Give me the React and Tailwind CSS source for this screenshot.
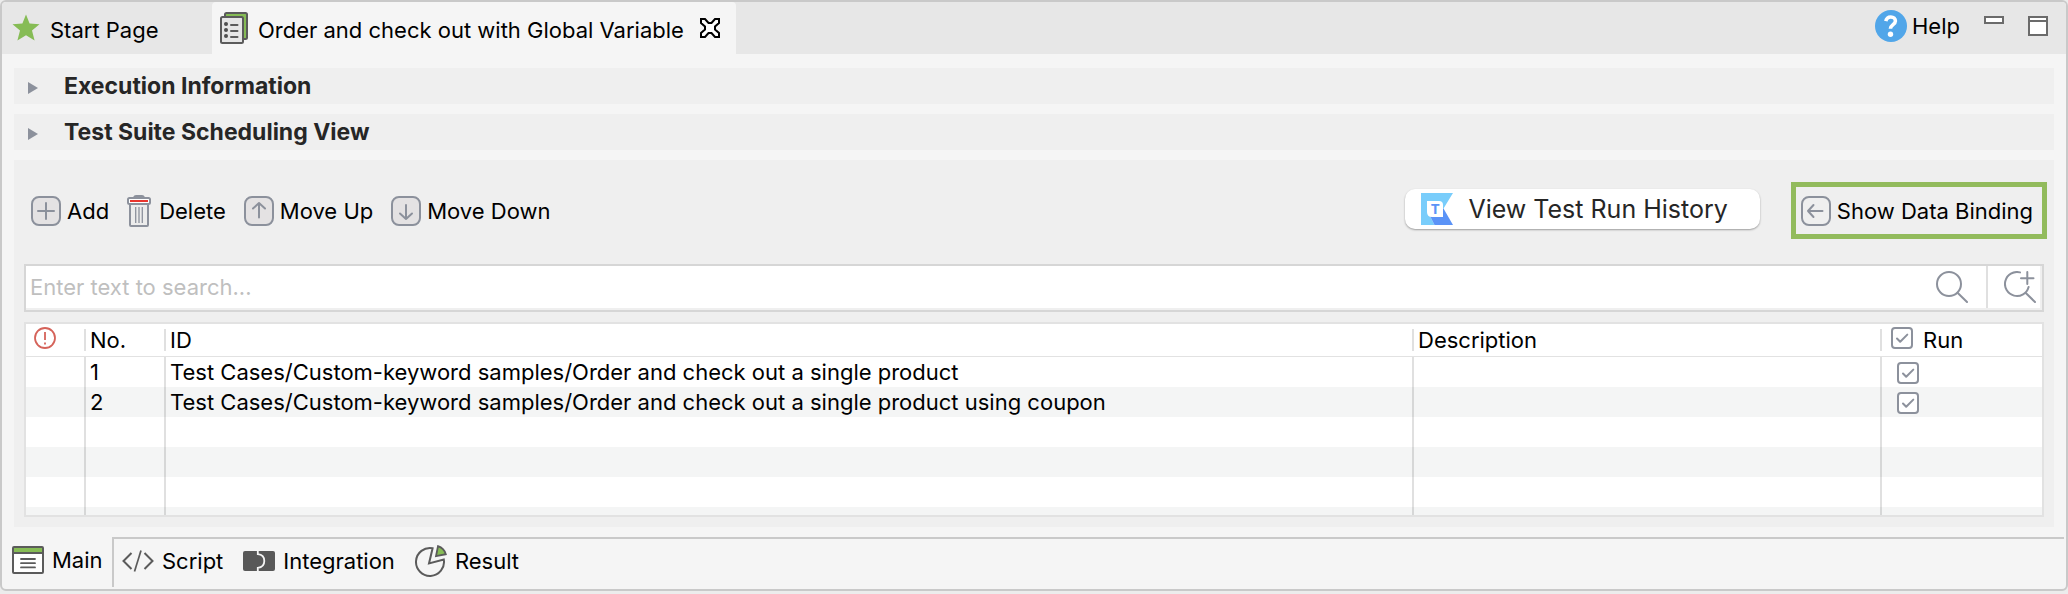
import { useState } from "react";

const CASES = [
  { no: 1, id: "Test Cases/Custom-keyword samples/Order and check out a single product" },
  { no: 2, id: "Test Cases/Custom-keyword samples/Order and check out a single product using coupon" },
];

function StarIcon() {
  return (
    <svg className="h-[28px] w-[28px]" viewBox="0 0 28 28" aria-hidden="true">
      <path fill="#86bc55" d="M14 0.5 17.6 9.6 27.5 10.2 20 16.6 22.6 26.5 14 21.2 5.4 26.5 8 16.6 0.5 10.2 10.4 9.6Z" />
    </svg>
  );
}

function SuiteIcon() {
  return (
    <svg className="h-[32px] w-[28px]" viewBox="0 0 28 32" aria-hidden="true">
      <rect x="5" y="1" width="22" height="26" rx="1.5" fill="#86bc55" stroke="#5b5b5b" strokeWidth="2" />
      <rect x="1" y="5" width="22" height="26" rx="1.5" fill="#e6e6e6" stroke="#5b5b5b" strokeWidth="2" />
      <g fill="#4f4f4f">
        <circle cx="6" cy="12" r="2" />
        <circle cx="6" cy="18" r="2" />
        <circle cx="6" cy="24" r="2" />
      </g>
      <path d="M11 13H17.5M11 19H17.5M11 25H17.5" stroke="#5b5b5b" strokeWidth="2" strokeLinecap="round" />
    </svg>
  );
}

function CloseIcon() {
  return (
    <svg className="h-[20px] w-[20px]" viewBox="0 0 20 20" aria-hidden="true">
      <path
        d="M1 1H5L8.5 5H11.5L15 1H19V5L15 8.5V11.5L19 15V19H15L11.5 15H8.5L5 19H1V15L5 11.5V8.5L1 5Z"
        fill="#fff"
        stroke="#000"
        strokeWidth="2"
      />
    </svg>
  );
}

function HelpIcon() {
  return (
    <svg className="h-[32px] w-[32px]" viewBox="0 0 32 32" aria-hidden="true">
      <circle cx="16" cy="16" r="16" fill="#51a6e9" />
      <path d="M10.8 11.2C11.4 8.3 13.2 7 15.8 7C18.6 7 20.4 8.7 20.4 11C20.4 14.6 15.4 14.6 15.4 18.8" fill="none" stroke="#fff" strokeWidth="3.6" />
      <circle cx="15.5" cy="24.2" r="2.7" fill="#fff" />
    </svg>
  );
}

function KeyIcon({ d, fill }) {
  return (
    <svg className="h-[30px] w-[30px]" viewBox="0 0 30 30" aria-hidden="true">
      <rect x="1" y="1" width="28" height="28" rx="7" fill={fill} stroke="#8c919c" strokeWidth="2" />
      <path d={d} fill="none" stroke="#8c919c" strokeWidth="2" strokeLinecap="round" strokeLinejoin="round" />
    </svg>
  );
}

function TrashIcon() {
  return (
    <svg className="h-[32px] w-[24px]" viewBox="0 0 24 32" aria-hidden="true">
      <path d="M6 2.2Q7 0 9 0H15Q17 0 18 2.2Z" fill="#8c919c" />
      <path d="M3 9V30Q3 31 4 31H20Q21 31 21 30V9" fill="#ececec" stroke="#8c919c" strokeWidth="2" />
      <rect x="1" y="3" width="22" height="6" rx="1.5" fill="#fff" stroke="#8c919c" strokeWidth="2" />
      <rect x="3" y="5" width="18" height="2" fill="#e8352e" />
      <path d="M8.7 12V28M12 12V28M15.3 12V28" stroke="#8c919c" strokeWidth="1.3" />
    </svg>
  );
}

function HistoryLogo() {
  return (
    <svg className="h-[32px] w-[32px]" viewBox="0 0 32 32" aria-hidden="true">
      <path d="M0 0H32L22.5 15.5L22 24L9 23L13.5 32H0Z" fill="#79cdfb" />
      <path d="M9 23L22.5 15.5L32 32H13.5Z" fill="#5b93f7" />
      <path d="M6 8H18Q22 8 22 12V24H11Q6 24 6 19Z" fill="#fff" />
      <text x="14.2" y="20.6" textAnchor="middle" fontFamily="'Liberation Mono', monospace" fontWeight="700" fontSize="15" fill="#5b93f7">T</text>
    </svg>
  );
}

function SearchIcon() {
  return (
    <svg className="h-[32px] w-[32px]" viewBox="0 0 32 32" aria-hidden="true">
      <g fill="none" stroke="#8c919c" strokeWidth="2" strokeLinecap="round">
        <circle cx="13" cy="13" r="12" />
        <path d="M21.8 22L31 31" />
      </g>
    </svg>
  );
}

function AdvancedSearchIcon() {
  return (
    <svg className="h-[32px] w-[32px]" viewBox="0 0 32 32" aria-hidden="true">
      <g fill="none" stroke="#8c919c" strokeWidth="2" strokeLinecap="round">
        <path d="M16 1.4A12 12 0 1 0 24.6 16" />
        <path d="M21.8 22L31 31M23.3 1V13M17 7.3H29.5" />
      </g>
    </svg>
  );
}

function AlertIcon() {
  return (
    <svg className="h-[22px] w-[22px]" viewBox="0 0 22 22" role="img" aria-label="Status">
      <circle cx="11" cy="11" r="10" fill="none" stroke="#d5635a" strokeWidth="1.8" />
      <path d="M11 5V13" stroke="#d5635a" strokeWidth="1.8" />
      <path d="M11 15.5V17.5" stroke="#d5635a" strokeWidth="1.8" />
    </svg>
  );
}

function MainIcon() {
  return (
    <svg className="h-[28px] w-[32px]" viewBox="0 0 32 28" aria-hidden="true">
      <rect x="1" y="1" width="30" height="26" rx="1" fill="#fff" stroke="#5b5b5b" strokeWidth="2" />
      <path d="M2 2H30V6H2Z" fill="#86bc55" />
      <path d="M1 7H31" stroke="#5b5b5b" strokeWidth="2" />
      <path d="M9 13H23M9 17.2H23M9 21.4H23" stroke="#5b5b5b" strokeWidth="1.8" strokeLinecap="round" />
    </svg>
  );
}

function ScriptIcon() {
  return (
    <svg className="h-[24px] w-[32px]" viewBox="0 0 32 24" aria-hidden="true">
      <g fill="none" stroke="#5b5b5b" strokeWidth="2">
        <path d="M9.5 4L1.5 12L9.5 20M22.5 4L30.5 12L22.5 20" />
        <path d="M19 1.5L12.5 22.5" strokeWidth="1.7" />
      </g>
    </svg>
  );
}

function IntegrationIcon() {
  return (
    <svg className="h-[20px] w-[32px]" viewBox="0 0 32 20" aria-hidden="true">
      <rect width="32" height="20" rx="2" fill="#585858" />
      <path d="M14.8 0V3.2C19 3.6 21.3 6.4 21.3 10C21.3 13.6 19 16.4 14.8 16.8V20" fill="none" stroke="#f5f5f5" strokeWidth="1.8" />
    </svg>
  );
}

function ResultIcon() {
  return (
    <svg className="h-[32px] w-[32px]" viewBox="0 0 32 32" aria-hidden="true">
      <path d="M17.6 3.2A14 14 0 1 0 28.8 14.6L14 18.4Z" fill="#f5f5f5" stroke="#5b5b5b" strokeWidth="2" />
      <path d="M23 1.2Q29 3.2 30.8 9.2L21 11.2Z" fill="#86bc55" stroke="#5b5b5b" strokeWidth="1.8" />
    </svg>
  );
}

function Tick({ label, checked, onChange }) {
  return (
    <span className="inline-grid h-[22px] w-[22px]">
      <input
        type="checkbox"
        aria-label={label}
        checked={checked}
        onChange={onChange}
        className="h-[22px] w-[22px] appearance-none rounded-[4px] border-2 border-[#8c919c] bg-white [grid-area:1/1]"
      />
      {checked && (
        <svg className="pointer-events-none h-[22px] w-[22px] [grid-area:1/1]" viewBox="0 0 22 22" aria-hidden="true">
          <path d="M6 11.5L9.2 14.8L16.3 7.6" fill="none" stroke="#8c919c" strokeWidth="2" strokeLinecap="round" strokeLinejoin="round" />
        </svg>
      )}
    </span>
  );
}

function Section({ title }) {
  return (
    <button type="button" aria-expanded="false" className="flex h-[36px] items-center gap-[26px] bg-[#efefef] px-[14px] text-left text-[23px] font-bold text-[#262626]">
      <svg className="mt-1 h-[12px] w-[10px]" viewBox="0 0 10 12" aria-hidden="true">
        <path d="M0 0L10 6L0 12Z" fill="#8c919c" />
      </svg>
      {title}
    </button>
  );
}

function HeadCell({ children, last }) {
  return (
    <th scope="col" className="h-[33px] p-0 text-left font-normal">
      <div className={last ? "flex h-[22px] items-center gap-[10px] pl-[9px]" : "flex h-[22px] items-center border-r-2 border-black/12 pl-1"}>
        {children}
      </div>
    </th>
  );
}

export default function App() {
  const [run, setRun] = useState([true, true]);
  const all = run.every(Boolean);
  const cell = "border-r-2 border-black/12 py-0 pr-0 pl-1";

  return (
    <div className="min-h-screen bg-[#ececec] font-[Inter,'Liberation_Sans',sans-serif] text-[22px] leading-[28px] text-black">
      <div className="flex flex-col overflow-hidden rounded-[6px] border-2 border-[#c9c9c9] bg-[#f5f5f5]">
        <header className="flex h-[52px] bg-[#e7e7e7]">
          <div role="tablist" className="flex">
            <button type="button" role="tab" aria-selected="false" className="flex w-[210px] items-center gap-[10px] pl-[10px]">
              <StarIcon />
              <span className="pt-1">Start Page</span>
            </button>
            <div className="flex items-center gap-4 rounded-t-[4px] bg-[#f5f5f5] pr-4 pl-2">
              <button type="button" role="tab" aria-selected="true" className="flex items-center gap-[10px]">
                <SuiteIcon />
                <span className="pt-1">Order and check out with Global Variable</span>
              </button>
              <button type="button" aria-label="Close tab">
                <CloseIcon />
              </button>
            </div>
          </div>
          <div className="ml-auto flex items-start pt-2 pr-[18px]">
            <button type="button" className="flex items-center gap-[5px]">
              <HelpIcon />
              Help
            </button>
            <button type="button" aria-label="Minimize" className="mt-[6px] ml-6 h-2 w-5 border-2 border-[#6b6b6b] bg-white" />
            <button type="button" aria-label="Maximize" className="mt-[6px] ml-6 flex h-5 w-5 flex-col border-2 border-[#6b6b6b] bg-white pt-[2px]">
              <span className="h-[2px] w-full bg-[#6b6b6b]" />
            </button>
          </div>
        </header>

        <main className="flex flex-col gap-[10px] px-3 pt-[14px] pb-[10px]">
          <Section title="Execution Information" />
          <Section title="Test Suite Scheduling View" />

          <section className="flex flex-col bg-[#efefef] px-[10px] pt-[22px] pb-[10px]">
            <div className="flex h-[57px] items-center">
              <div role="toolbar" className="flex items-center gap-[18px] pl-[7px]">
                <button type="button" className="flex items-center gap-[6px]">
                  <KeyIcon fill="#e4e2e3" d="M15 7V23M7 15H23" />
                  Add
                </button>
                <button type="button" className="flex items-center gap-2">
                  <TrashIcon />
                  Delete
                </button>
                <button type="button" className="flex items-center gap-[6px]">
                  <KeyIcon fill="#e4e2e3" d="M15 7V21.5M9 12.5L15 7L21 12.5" />
                  Move Up
                </button>
                <button type="button" className="flex items-center gap-[6px]">
                  <KeyIcon fill="#e4e2e3" d="M15 9V23M9 17.5L15 23L21 17.5" />
                  Move Down
                </button>
              </div>
              <button type="button" className="mt-[7px] mr-[31px] ml-auto flex h-[40px] items-center gap-[15px] self-start rounded-[10px] bg-white pr-[32px] pl-4 text-[25px] text-[#262626] shadow-[0_1px_2px_rgba(0,0,0,0.35)]">
                <HistoryLogo />
                View Test Run History
              </button>
              <button type="button" className="-mr-[3px] flex h-[57px] items-center gap-[6px] border-[5px] border-[#92bb5c] pr-[9px] pl-[5px]">
                <KeyIcon fill="#efefef" d="M21.5 15H7M12.5 9L7 15L12.5 21" />
                Show Data Binding
              </button>
            </div>

            <div className="mt-[25px] flex h-[48px] border-2 border-[#d6d6d6] bg-[#efefef] pr-[2px] pb-[2px]">
              <input
                type="text"
                aria-label="Search"
                placeholder="Enter text to search..."
                className="min-w-0 flex-1 bg-white pl-1 outline-none placeholder:text-[#bfbfbf]"
              />
              <button type="button" aria-label="Search" className="bg-white pr-[18px]">
                <SearchIcon />
              </button>
              <button type="button" aria-label="Advanced search" className="border-l-2 border-[#e0e0e0] bg-white pr-1 pl-4">
                <AdvancedSearchIcon />
              </button>
            </div>

            <div className="mt-[10px] border-2 border-[#e2e2e2] bg-white">
              <table className="w-full table-fixed border-separate border-spacing-0">
                <colgroup>
                  <col className="w-[60px]" />
                  <col className="w-[80px]" />
                  <col />
                  <col className="w-[468px]" />
                  <col className="w-[160px]" />
                </colgroup>
                <thead>
                  <tr className="[&>th]:border-b [&>th]:border-[#e2e2e2]">
                    <HeadCell>
                      <span className="pb-1 pl-1">
                        <AlertIcon />
                      </span>
                    </HeadCell>
                    <HeadCell>No.</HeadCell>
                    <HeadCell>ID</HeadCell>
                    <HeadCell>Description</HeadCell>
                    <HeadCell last>
                      <span className="flex pb-1">
                        <Tick label="Run all" checked={all} onChange={() => setRun(run.map(() => !all))} />
                      </span>
                      Run
                    </HeadCell>
                  </tr>
                </thead>
                <tbody>
                  {CASES.map((c, i) => (
                    <tr key={c.no} className="h-[30px] even:bg-[#f4f5f5]">
                      <td className={cell} />
                      <td className={cell}>{c.no}</td>
                      <td className={cell}>{c.id}</td>
                      <td className={cell} />
                      <td className="p-0">
                        <div className="flex pt-[2px] pl-[15px]">
                          <Tick
                            label={"Run test case " + c.no}
                            checked={run[i]}
                            onChange={() => setRun(run.map((v, j) => (j === i ? !v : v)))}
                          />
                        </div>
                      </td>
                    </tr>
                  ))}
                  {[0, 1, 2, 3].map((k) => (
                    <tr key={k} className={k === 3 ? "h-2 even:bg-[#f4f5f5]" : "h-[30px] even:bg-[#f4f5f5]"}>
                      <td className={cell} />
                      <td className={cell} />
                      <td className={cell} />
                      <td className={cell} />
                      <td className="p-0" />
                    </tr>
                  ))}
                </tbody>
              </table>
            </div>
          </section>
        </main>

        <nav role="tablist" className="flex h-[52px] pr-[2px] pb-[2px]">
          <button type="button" role="tab" aria-selected="true" className="flex w-[110px] items-center gap-2 pb-1 pl-[10px]">
            <MainIcon />
            Main
          </button>
          <div className="flex flex-1 items-center gap-5 border-t-2 border-l-2 border-[#c9c9c9] pb-1 pl-2">
            <button type="button" role="tab" aria-selected="false" className="flex items-center gap-2">
              <ScriptIcon />
              Script
            </button>
            <button type="button" role="tab" aria-selected="false" className="flex items-center gap-2">
              <IntegrationIcon />
              Integration
            </button>
            <button type="button" role="tab" aria-selected="false" className="flex items-center gap-2">
              <ResultIcon />
              Result
            </button>
          </div>
        </nav>
      </div>
    </div>
  );
}
